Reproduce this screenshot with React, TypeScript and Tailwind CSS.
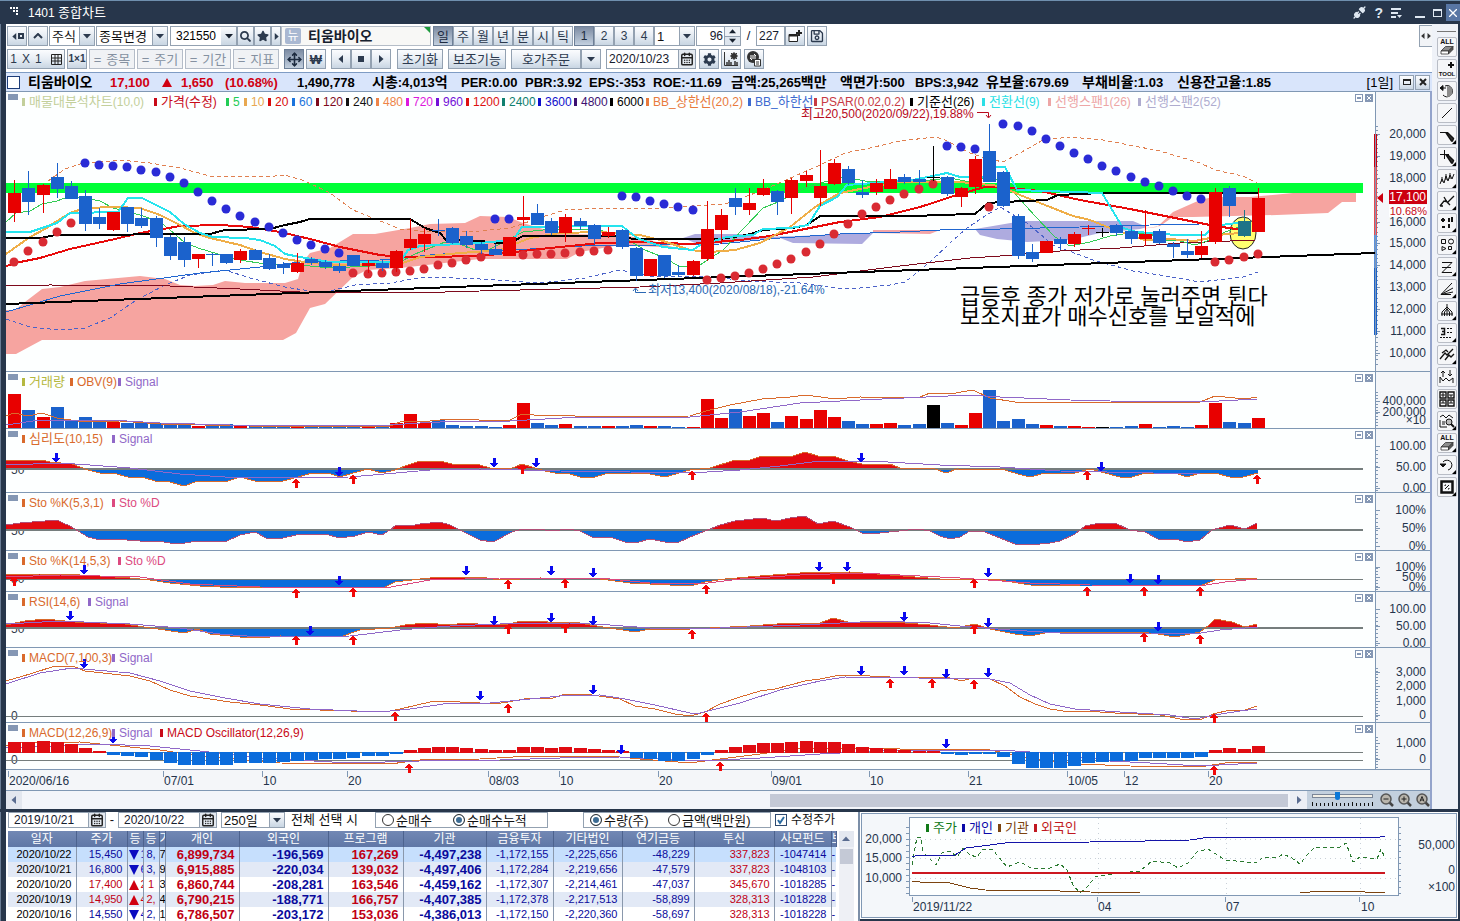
import React from 'react';
import { Move, CalendarDays, Unplug } from 'lucide-react';
import { FaCog, FaRegSave, FaSearch, FaStar } from 'react-icons/fa';

type Pt = [number, number];

const RED = '#e80000';
const BLUE = '#1b62cc';
const FIRST_X = 14.3;
const STEP = 14.13;
const xAt = (i: number) => Math.round(FIRST_X + STEP * i);

const parse = (s: string): Pt[] => s.trim().split(/\s+/).map((p) => p.split(',').map(Number) as Pt);

/* ---------- price data: kind, high, body top, body bottom, low ---------- */
type Candle = ['r' | 'b' | 'k' | 't', number, number, number, number];
const candles: Candle[] = [
  ['r', 180, 193, 213, 222], ['b', 171, 188, 202, 215], ['r', 184, 185, 195, 213], ['b', 163, 177, 189, 198],
  ['b', 181, 186, 199, 199], ['b', 190, 196, 224, 231], ['b', 208, 217, 224, 229], ['r', 212, 212, 230, 231],
  ['b', 207, 207, 224, 232], ['b', 208, 218, 226, 228], ['b', 216, 218, 238, 247], ['b', 235, 237, 256, 260],
  ['b', 237, 242, 260, 267], ['r', 254, 254, 259, 268], ['b', 253, 254, 255, 266], ['b', 254, 254, 263, 264],
  ['r', 249, 251, 260, 263], ['b', 249, 250, 260, 260], ['b', 254, 258, 269, 270], ['b', 262, 264, 268, 274],
  ['r', 253, 263, 272, 273], ['b', 257, 259, 263, 265], ['b', 260, 262, 267, 269], ['b', 263, 266, 271, 273],
  ['b', 255, 255, 266, 266], ['r', 260, 263, 266, 273], ['b', 260, 263, 268, 271], ['r', 250, 251, 268, 272],
  ['r', 219, 239, 248, 250], ['r', 228, 234, 244, 252], ['b', 219, 230, 231, 236], ['b', 227, 228, 243, 244],
  ['b', 231, 236, 245, 248], ['b', 242, 244, 250, 254], ['b', 244, 249, 255, 255], ['r', 237, 237, 256, 256],
  ['r', 196, 217, 220, 226], ['b', 204, 213, 225, 225], ['b', 218, 221, 233, 235], ['r', 214, 217, 233, 242],
  ['b', 218, 221, 226, 230], ['b', 224, 225, 239, 244], ['r', 227, 232, 236, 238], ['b', 229, 230, 247, 249],
  ['b', 247, 248, 276, 281], ['r', 259, 259, 276, 276], ['b', 255, 255, 276, 278], ['b', 265, 272, 275, 277],
  ['r', 260, 261, 275, 276], ['r', 201, 229, 259, 261], ['r', 209, 215, 230, 244], ['b', 188, 198, 207, 215],
  ['r', 188, 203, 210, 215], ['r', 179, 188, 195, 196], ['b', 190, 191, 202, 215], ['r', 178, 180, 198, 214],
  ['r', 171, 175, 181, 187], ['r', 150, 186, 198, 206], ['r', 159, 163, 184, 185], ['b', 166, 169, 183, 185],
  ['b', 180, 192, 195, 198], ['r', 179, 183, 192, 195], ['r', 169, 179, 189, 189], ['b', 174, 177, 182, 184],
  ['b', 170, 179, 182, 185], ['k', 146, 177, 178, 181], ['b', 176, 177, 194, 196], ['r', 187, 188, 197, 207],
  ['r', 156, 159, 187, 194], ['b', 124, 151, 182, 182], ['b', 171, 172, 206, 207], ['b', 214, 216, 256, 259],
  ['b', 244, 252, 259, 262], ['r', 241, 241, 253, 253], ['b', 237, 239, 244, 250], ['r', 232, 234, 244, 247],
  ['r', 225, 228, 229, 235], ['k', 228, 232, 233, 237], ['b', 224, 225, 233, 236], ['b', 226, 231, 239, 244],
  ['r', 210, 234, 239, 246], ['b', 229, 231, 243, 244], ['b', 242, 244, 247, 258], ['b', 239, 251, 255, 258],
  ['r', 231, 246, 255, 258], ['r', 188, 192, 242, 244], ['b', 186, 188, 206, 217], ['t', 210, 221, 236, 237],
  ['r', 188, 198, 232, 232],
];
const candleColor = { r: RED, b: BLUE, k: '#000000', t: '#1d7488' };

/* parabolic SAR: first index, colour, consecutive y values */
const sar: [number, string, number[]][] = [
  [0, '#d92b33', [262, 251, 242, 232, 223]],
  [5, '#2a2bd6', [163, 165, 166, 167, 170, 172, 177, 183, 192, 201, 209, 216, 222, 227, 233, 240, 245, 249, 253]],
  [24, '#d92b33', [273, 274, 273, 272, 271, 269, 265, 263, 260, 257]],
  [34, '#2a2bd6', [219, 219]],
  [36, '#d92b33', [255, 254, 254, 253, 252, 251, 250]],
  [43, '#2a2bd6', [196, 197, 201, 204, 207, 210]],
  [49, '#d92b33', [280, 278, 276, 273, 269, 264, 259, 252, 244, 234, 224, 214, 207, 200, 194, 189, 184]],
  [66, '#2a2bd6', [146, 147, 149]],
  [69, '#d92b33', [207]],
  [70, '#2a2bd6', [124, 126, 131, 139, 146, 153, 159, 166, 171, 177, 182, 186, 191, 196, 199]],
  [85, '#d92b33', [262, 260, 257, 254]],
];

const clouds: [string, string][] = [
  ['#f6a4a0', '6,310 15,310 25,302 42,289 60,287 85,281 140,276 165,279 180,285 195,286 213,285 225,281 245,283 285,283 298,279 303,262 310,253 330,248 353,234 375,234 410,228 430,224 465,223 480,216 508,217 523,223 553,232 563,234 623,235 650,240 673,247 660,247 620,245 580,252 567,259 480,259 400,268 367,270 353,277 325,304 310,308 296,333 283,340 42,340 16,354 6,354'],
  ['#aeabdf', '683,238 695,234 740,234 763,237 800,236 840,234 873,233 862,244 793,243 780,238 763,239 700,245'],
  ['#f3a5a8', '873,233 873,230 940,230 930,234'],
  ['#aeabdf', '975,229 993,226 1023,221 1133,221 1147,227 1140,229 1100,233 1070,240 1027,242 997,239 980,235'],
  ['#f6a4a0', '1140,229 1157,227 1173,212 1200,200 1213,197 1250,197 1293,193 1330,193 1342,183 1356,183 1356,202 1342,202 1328,213 1277,215 1193,217 1173,217 1160,226'],
];

const priceLines: { c: string; w: number; dash?: string; p: string }[] = [
  { c: '#e08050', w: 1, dash: '4 3', p: '48,181 65,169 80,164 120,160 150,163 180,168 210,176 275,176 285,175 305,181 330,193 353,210 400,229 430,232 480,231 510,228 545,216 565,210 600,208 660,208 725,204 750,195 770,187 820,165 845,153 870,148 900,141 935,137 943,139 970,153 985,158 1003,162 1020,153 1043,140 1070,137 1103,140 1160,151 1200,163 1215,170 1243,176 1257,183' },
  { c: '#4b62c8', w: 1, dash: '4 3', p: '6,319 30,327 60,330 85,328 110,318 135,301 165,285 190,275 225,270 250,278 285,287 310,291 330,291 355,285 390,283 425,277 480,279 540,283 585,278 620,270 650,276 700,276 750,281 800,283 835,288 860,288 890,285 905,282 930,262 950,243 967,228 985,216 1000,207 1027,223 1053,245 1093,260 1133,271 1160,275 1200,282 1243,277 1258,272' },
  { c: '#7d0a1c', w: 1, p: '6,286 50,285 170,286 240,289 300,292 410,293 480,291 640,287 720,283 813,277 900,266 970,258 1000,256 1060,251 1120,248 1180,243 1255,240' },
  { c: '#1f66d0', w: 1, p: '6,312 60,296 120,284 200,273 260,267 300,262 380,260 430,255 470,252 530,249 600,245 660,245 720,244 780,238 840,234 900,232 960,229 1000,229 1080,227 1150,225 1200,224 1245,224' },
  { c: '#33cc55', w: 1, p: '6,222 16,213 30,211 42,204 57,201 70,196 84,198 100,201 113,208 140,215 160,222 170,230 184,242 198,248 218,254 240,260 265,264 290,264 330,268 370,266 400,262 415,254 430,248 445,242 460,244 475,250 490,249 508,240 523,232 543,230 560,229 600,230 628,240 645,250 665,258 680,267 700,265 723,250 745,227 763,208 778,202 790,196 805,188 820,183 845,177 860,180 870,182 900,181 930,180 950,178 970,182 990,176 1008,186 1035,216 1055,237 1070,246 1090,242 1110,236 1130,233 1150,234 1165,240 1180,241 1195,245 1210,240 1225,232 1245,225' },
  { c: '#e80a0a', w: 2, p: '6,266 20,262 40,258 70,249 115,239 140,233 180,226 220,225 250,227 280,232 310,239 340,247 380,255 400,257 440,257 490,255 540,249 600,243 640,242 690,244 740,240 770,236 800,230 840,222 880,217 920,207 960,194 985,187 1010,188 1040,191 1080,200 1130,209 1180,219 1215,226 1243,230' },
  { c: '#efae48', w: 2, p: '6,254 30,237 45,229 57,221 70,213 85,208 115,207 140,208 160,215 180,225 195,233 210,238 240,245 260,252 285,259 310,263 340,265 400,264 420,257 460,253 500,250 530,238 560,233 600,232 640,235 660,240 690,250 710,252 735,250 760,243 790,227 815,207 840,193 870,187 900,182 960,182 1000,186 1020,195 1045,205 1073,216 1090,220 1110,228 1130,235 1145,240 1170,239 1195,241 1210,238 1225,234 1243,233' },
  { c: '#000000', w: 2, p: '6,238 40,238 56,235 210,234 225,230 270,229 285,225 300,222 310,219 410,219 425,228 440,233 446,240 480,241 508,244 523,236 625,236 632,239 720,239 747,235 763,230 793,228 807,225 820,216 913,216 970,214 975,214 988,203 1003,202 1047,200 1058,195 1103,193 1258,193' },
  { c: '#25e4ee', w: 2, p: '6,232 30,232 45,227 57,223 70,213 118,212 128,198 142,198 170,212 184,224 200,233 213,237 245,238 260,240 275,246 285,254 300,257 330,262 400,262 408,250 420,246 480,243 513,240 522,227 622,226 637,238 663,247 693,250 700,245 727,237 753,235 763,229 790,228 808,225 820,206 837,197 847,185 913,180 947,173 960,177 990,177 995,167 1005,167 1017,190 1102,193 1123,228 1137,232 1177,235 1205,235 1213,227 1227,224 1240,223' },
  { c: '#000000', w: 2, p: '6,304 480,286 970,268 1375,253' },
];

/* volume bar heights, in candle order */
const volumes = [34, 18, 11, 21, 8, 11, 6, 6, 5, 6, 5, 4, 4, 2, 2, 4, 2, 3, 2, 1, 1, 1, 1, 1, 2, 2, 1, 5, 14, 5, 8, 3, 2, 2, 1, 3, 25, 5, 3, 4, 2, 2, 2, 2, 3, 2, 2, 1, 1, 29, 10, 19, 12, 15, 6, 12, 9, 18, 11, 7, 4, 4, 5, 3, 4, 23, 5, 3, 15, 38, 7, 9, 4, 3, 2, 2, 1, 1, 1, 2, 4, 1, 2, 1, 3, 25, 6, 5, 10];

const oscillator = [10, 10, 11, 10, 8, 4, 1, -2, -3, -4, -7, -10, -12, -12, -12, -12, -10, -10, -10, -9, -8, -7, -6, -6, -5, -3, -3, -1, 2, 4, 5, 5, 4, 3, 2, 2, 5, 5, 4, 5, 4, 3, 2, 1, -5, -6, -8, -8, -6, -2, 2, 5, 7, 9, 9, 10, 11, 10, 10, 8, 5, 4, 3, 2, 1, 1, -1, -2, -1, -1, -4, -11, -15, -15, -15, -13, -10, -9, -8, -8, -5, -5, -5, -5, -4, 2, 4, 3, 6];

/* ---------- shared pieces ---------- */
const cells = (s: string) => [...s].reduce((n, ch) => n + (ch.charCodeAt(0) > 0x2000 ? 2 : 1), 0);

/* Korean runs are set one step larger than the Latin text around them. */
function T({ s, big = 'text-[13px]' }: { s: string; big?: string }) {
  return <>{s.split(/([\uac00-\ud7a3]+)/).map((part, i) => (i % 2 ? <span key={i} className={big}>{part}</span> : part))}</>;
}

function Legend({ items, place = 'left-4 top-1' }: { items: [string, string][]; place?: string }) {
  return (
    <div className={`absolute flex whitespace-nowrap text-xs leading-3 ${place}`}>
      {items.map(([label, color], i) => (
        <span key={i} className="flex items-center" style={{ color, width: cells(label) * 6 + 12 }}>
          <i className="mr-[4px] h-2 w-[3px] shrink-0 bg-current" />
          <span className="leading-3"><T s={label} /></span>
        </span>
      ))}
    </div>
  );
}

function Line({ p, c, w = 1, dash }: { p: string; c: string; w?: number; dash?: string }) {
  return <polyline points={p} fill="none" stroke={c} strokeWidth={w} strokeDasharray={dash} shapeRendering="crispEdges" />;
}

function Arrow({ x, y, up }: { x: number; y: number; up?: boolean }) {
  const d = up ? 'M0-5L4 0H2V5H-1V0H-4Z' : 'M0 5L4 0H2V-5H-1V0H-4Z';
  return <path d={d} transform={`translate(${x} ${y})`} fill={up ? '#f00808' : '#0a0af0'} shapeRendering="crispEdges" />;
}

function Arrows({ down, up }: { down: string; up: string }) {
  return (
    <g>
      {parse(down).map(([x, y], i) => <Arrow key={i} x={x} y={y} />)}
      {parse(up).map(([x, y], i) => <Arrow key={i} x={x} y={y} up />)}
    </g>
  );
}

function Area({ id, p, base, line, baseW = 2 }: { id: string; p: string; base: number; line: string; baseW?: number }) {
  const pts = parse(p);
  const d = `6,${base} ${p} ${pts[pts.length - 1][0]},${base}`;
  return (
    <g shapeRendering="crispEdges">
      <clipPath id={id + 'a'}><rect x="0" y={base - 60} width="1400" height="60" /></clipPath>
      <clipPath id={id + 'b'}><rect x="0" y={base} width="1400" height="60" /></clipPath>
      <polygon points={d} fill="#e20a10" clipPath={`url(#${id}a)`} />
      <polygon points={d} fill="#0a6cdc" clipPath={`url(#${id}b)`} />
      <Line p={`6,${base} 1363,${base}`} c="#757d7d" w={baseW} />
      <Line p={p} c={line} />
    </g>
  );
}

interface AxisSpec { labels: [string, number][]; from: number; to: number; gap: number }

function Axis({ top, height, labels, from, to, gap, children }: AxisSpec & { top: number; height: number; children?: React.ReactNode }) {
  const ticks: number[] = [];
  for (let y = from; y <= to; y += gap) ticks.push(Math.round(y));
  return (
    <svg className="block h-full w-[54px] shrink-0 overflow-visible" viewBox={`1376 ${top} 54 ${height}`} aria-hidden="true">
      {ticks.map((y) => <rect key={y} x="1376" y={y} width="2" height="1" fill="#8098b4" />)}
      {labels.map(([t, y], i) => (
        <g key={i}>
          <rect x="1376" y={y} width="4" height="1" fill="#8098b4" />
          <text x="1426" y={y + 4} textAnchor="end" fontSize="12" fill="#24344c">{t}</text>
        </g>
      ))}
      {children}
    </svg>
  );
}

function PanelButtons() {
  return (
    <div className="absolute right-[2px] top-[2px] flex gap-[2px]">
      <button aria-label="패널 최대화" className="flex size-2 items-center justify-center border border-[#8497b4] bg-white"><i className="h-[2px] w-1 bg-[#8497b4]" /></button>
      <button aria-label="패널 닫기" className="flex size-2 items-center justify-center bg-[#8497b4]">
        <svg viewBox="0 0 6 6" className="size-[6px]"><path d="M1 1l4 4M5 1l-4 4" stroke="#fff" /></svg>
      </button>
    </div>
  );
}

function Panel({ top, h, legend, axis, axisExtra, overlay, children, cls }: {
  top: number; h: number; legend: [string, string][]; axis: AxisSpec; axisExtra?: React.ReactNode; overlay?: React.ReactNode; children: React.ReactNode; cls: string;
}) {
  return (
    <section className={`flex border-t border-[#8098b4] ${cls}`}>
      <div className="relative min-w-0 flex-1 border-r border-[#8098b4]">
        <svg className="block h-full w-full overflow-visible" viewBox={`6 ${top + 1} 1369 ${h - 1}`} preserveAspectRatio="none" aria-hidden="true">
          {children}
        </svg>
        <i className="absolute left-[2px] top-[2px] h-[6px] w-[10px] bg-[#8497b4]" />
        <Legend items={legend} />
        <PanelButtons />
        {overlay}
      </div>
      <div className="shrink-0 bg-[#f4f6f9]">
        <Axis top={top + 1} height={h - 1} {...axis}>{axisExtra}</Axis>
      </div>
    </section>
  );
}

const LevelText = ({ y, t }: { y: number; t: string }) => <text x="11" y={y} fontSize="12" fill="#333c4c">{t}</text>;

/* ---------- toolbar controls ---------- */
const face = 'border border-[#93a1b1] bg-linear-to-b from-[#fbfcfe] via-[#e7edf4] to-[#c9d6e3] text-[#2c3a4e]';
const faceOn = 'border border-[#6d7f97] bg-linear-to-b from-[#7d8ca3] to-[#c3d0df] text-[#1d2b40]';

function Btn({ label, children, cls = 'w-5', on, muted }: { label?: string; children: React.ReactNode; cls?: string; on?: boolean; muted?: boolean }) {
  const skin = on ? faceOn : muted ? 'border border-[#b4bcc8] bg-[#f0f2f5] text-[#8591a1]' : face;
  return (
    <button aria-label={label} className={`flex h-5 shrink-0 items-center justify-center whitespace-nowrap text-[13px] leading-none ${skin} ${cls}`}>
      {children}
    </button>
  );
}

const Tri = ({ d, s = 8 }: { d: string; s?: number }) => (
  <svg viewBox="0 0 8 8" width={s} height={s} fill="currentColor" className="shrink-0" aria-hidden="true"><path d={d} /></svg>
);
const DOWN = 'M0 2H8L4 6.500Z';
const UP = 'M0 6H8L4 1.500Z';
const LEFT = 'M6 0V8L1.500 4Z';
const RIGHT = 'M2 0V8L6.500 4Z';

function Select({ label, options, cls, h = 'h-5' }: { label: string; options: string[]; cls: string; h?: string }) {
  return (
    <span className={`flex shrink-0 border border-[#93a1b1] bg-white ${h} ${cls}`}>
      <select aria-label={label} className="min-w-0 flex-1 appearance-none bg-transparent pl-[2px] text-[13px] leading-none text-[#111] outline-none">
        {options.map((o) => <option key={o}>{o}</option>)}
      </select>
      <span className="flex w-[15px] items-center justify-center border-l border-[#93a1b1] bg-linear-to-b from-[#fbfcfe] to-[#c9d6e3] text-[#2c3a4e]"><Tri d={DOWN} /></span>
    </span>
  );
}

function DateField({ label, value, cls, h = 'h-5', size = 'pl-[2px]' }: { label: string; value: string; cls: string; h?: string; size?: string }) {
  return (
    <span className={`flex shrink-0 border border-[#93a1b1] bg-white ${h} ${cls}`}>
      <input aria-label={label} defaultValue={value} className={`min-w-0 flex-1 bg-transparent text-xs leading-none text-[#16202e] outline-none ${size}`} />
      <button aria-label={`${label} 달력`} className="flex w-[17px] items-center justify-center border-l border-[#93a1b1] bg-[#e3e9f0] text-[#222]"><CalendarDays size={14} strokeWidth={2.500} /></button>
    </span>
  );
}

function Toolbar() {
  return (
    <div className="relative flex h-12 flex-col gap-[3px] bg-white pl-[1px] pt-[2px]">
      <div className="flex">
        <Btn label="왼쪽 접기"><Tri d={LEFT} s={7} /><i className="size-[6px] border-2 border-current" /></Btn>
        <Btn label="위로" cls="ml-[1px] w-5"><svg viewBox="0 0 10 6" className="w-[10px]" fill="none" stroke="currentColor" strokeWidth="2"><path d="M1 5l4-4 4 4" /></svg></Btn>
        <Select label="시장" options={['주식']} cls="ml-[1px] w-[46px]" />
        <Select label="종목변경" options={['종목변경']} cls="ml-[1px] w-[72px]" />
        <span className="ml-[2px] flex h-5 w-[67px] shrink-0 border border-[#93a1b1]">
          <input aria-label="종목코드" defaultValue="321550" className="min-w-0 flex-1 pl-[5px] text-xs leading-none text-black outline-none" />
          <button aria-label="종목 이력" className="flex w-[15px] items-center justify-center bg-linear-to-b from-[#fbfcfe] to-[#c9d6e3]"><Tri d={DOWN} /></button>
        </span>
        <Btn label="종목검색" cls="w-[17px]"><FaSearch size={11} /></Btn>
        <Btn label="관심종목" cls="w-[17px]"><FaStar size={12} /></Btn>
        <Btn label="다음" cls="w-[10px]"><Tri d={RIGHT} s={7} /></Btn>
        <span className="relative flex h-5 w-[150px] shrink-0 items-center border border-[#b5bdc7] bg-[#f8f8f6]">
          <b className="ml-[3px] flex size-4 items-center justify-center rounded-[2px] bg-[#a9b8d2] text-xs font-normal leading-none text-white">뉴</b>
          <b className="ml-[7px] text-[14px] leading-none">티움바이오</b>
          <svg viewBox="0 0 6 6" className="absolute right-0 top-0 size-[6px]" fill="#1d9a3c"><path d="M0 0H6V6Z" /></svg>
        </span>
        <span className="ml-[2px] flex">
          {['일', '주', '월', '년', '분', '시', '틱'].map((t, i) => <Btn key={t} on={i === 0}>{t}</Btn>)}
        </span>
        <span className="ml-[1px] flex">
          {['1', '2', '3', '4'].map((t, i) => <Btn key={t} on={i === 0}><span className="text-xs">{t}</span></Btn>)}
        </span>
        <Select label="주기" options={['1', '2', '3']} cls="w-[41px]" />
        <span className="ml-[1px] flex h-5 w-[45px] shrink-0 border border-[#93a1b1]">
          <input aria-label="표시 봉수" defaultValue="96" className="min-w-0 flex-1 pr-[1px] text-right text-xs leading-none outline-none" />
          <span className="flex w-4 flex-col border-l border-[#93a1b1]">
            <button aria-label="증가" className="flex flex-1 items-center justify-center bg-[#eef2f7]"><Tri d={UP} s={7} /></button>
            <button aria-label="감소" className="flex flex-1 items-center justify-center border-t border-[#93a1b1] bg-[#dde5ee]"><Tri d={DOWN} s={7} /></button>
          </span>
        </span>
        <span className="w-[15px] text-center text-[13px] leading-5">/</span>
        <input aria-label="전체 봉수" defaultValue="227" className="h-5 w-[29px] shrink-0 border border-[#93a1b1] pl-[2px] text-xs leading-none outline-none" />
        <Btn label="새 차트"><svg viewBox="0 0 14 14" className="size-[14px]" fill="none" stroke="#222"><path d="M1 5.500H9.500V12.500H1Z" fill="#fff" /><path d="M1 6.500H9.500" strokeWidth="2" /><path d="M11 1V7M8 4H14" strokeWidth="2" /></svg></Btn>
        <Btn label="저장" cls="ml-[2px] w-5"><FaRegSave size={14} /></Btn>
      </div>
      <div className="flex">
        <Btn label="분할 설정" cls="w-[58px] gap-[9px]"><span className="flex gap-[5px] text-xs"><span>1</span><span>X</span><span>1</span></span><svg viewBox="0 0 11 11" className="size-[11px]" fill="none" stroke="#222"><path d="M.5.5H10.500V10.500H.5ZM.5 4H10.500M.5 7H10.500M4 .5V10.500M7 .5V10.500" /></svg></Btn>
        <Btn label="1×1" cls="ml-[2px] w-5"><b className="text-[10px]">1×1</b></Btn>
        {['종목', '주기', '기간', '지표'].map((t) => (
          <Btn key={t} muted cls="ml-[2px] w-[46px] gap-[5px]"><span>=</span><span>{t}</span></Btn>
        ))}
        <Btn label="이동" on cls="ml-[5px] w-5"><Move size={15} strokeWidth={2.500} /></Btn>
        <Btn label="원화" cls="ml-[2px] w-5"><b className="text-[13px]">₩</b></Btn>
        <span className="ml-[5px] flex">
          <Btn label="이전"><Tri d={LEFT} /></Btn>
          <Btn label="정지"><i className="size-[6px] bg-current" /></Btn>
          <Btn label="재생"><Tri d={RIGHT} /></Btn>
        </span>
        <Btn cls="ml-[6px] w-[46px]">초기화</Btn>
        <Btn cls="ml-[5px] w-[58px]">보조기능</Btn>
        <Btn cls="ml-[5px] w-[70px]">호가주문</Btn>
        <Btn label="호가주문 메뉴"><Tri d={DOWN} /></Btn>
        <DateField label="기준일" value="2020/10/23" cls="ml-[5px] w-[90px]" />
        <Btn label="설정" cls="ml-[3px] w-5"><FaCog size={13} /></Btn>
        <Btn label="지표 설정" cls="ml-[2px] w-5"><svg viewBox="0 0 16 16" className="size-4" fill="none" stroke="#333"><path d="M1.500 1V14.500H15" /><path d="M4 14V11M6 14V9M8 14V11M12 14V10M14 14V11" strokeWidth="1.500" /><circle cx="11" cy="5" r="2" strokeWidth="2" /><path d="M11 1V9M7 5H15M8 2L14 8M14 2L8 8" /></svg></Btn>
        <Btn label="차트 변환" cls="ml-[3px] w-5"><svg viewBox="0 0 16 16" className="size-4" fill="none" stroke="#fff"><circle cx="7" cy="6" r="6" fill="#333" stroke="none" /><path d="M4 5H10L8 3M10 7H4L6 9" /><path d="M8.500 8.500H14.500V15H8.500Z" fill="#fff" stroke="#333" /><path d="M10 11H13M10 13H13" stroke="#333" /></svg></Btn>
      </div>
      <button aria-label="도구 접기" className="absolute right-0 top-[1px] flex h-[22px] w-[13px] items-center justify-center border border-r-0 border-[#93a1b1] bg-[#f2f4f7] text-[#333]">
        <Tri d={LEFT} s={6} /><Tri d={RIGHT} s={6} />
      </button>
    </div>
  );
}

const facts = ['시총:4,013억', 'PER:0.00', 'PBR:3.92', 'EPS:-353', 'ROE:-11.69', '금액:25,265백만', '액면가:500', 'BPS:3,942', '유보율:679.69', '부채비율:1.03', '신용잔고율:1.85'];
const boldWidth = (s: string) => [...s].reduce((n, ch) => n + (ch.charCodeAt(0) > 0x2000 ? 13 : 7), 0);

function InfoBar() {
  return (
    <div className="flex h-[19px] items-center whitespace-nowrap border-t border-[#7f9cc4] bg-[#d9e5fb] pl-[1px] text-[13px] font-bold leading-none text-black">
      <input type="checkbox" aria-label="종목 선택" className="size-[13px] shrink-0 appearance-none border border-[#1d3c78] bg-white" />
      <span className="ml-2 w-[82px] shrink-0 text-[14px]">티움바이오</span>
      <span className="flex w-[187px] shrink-0 items-center text-[#d00012]">
        <span className="w-[52px]">17,100</span>
        <svg viewBox="0 0 10 9" className="mr-[9px] h-[9px] w-[10px]" fill="#d00012"><path d="M5 0L10 9H0Z" /></svg>
        <span className="w-[44px]">1,650</span>
        <span>(10.68%)</span>
      </span>
      <span className="w-[75px] shrink-0">1,490,778</span>
      {facts.map((f) => <span key={f} className="mr-2 shrink-0" style={{ width: boldWidth(f) }}><T s={f} big="text-[14px] leading-none" /></span>)}
      <span className="ml-auto font-normal">[1일]</span>
      <button aria-label="차트 최대화" className={`ml-[6px] flex size-[15px] items-center justify-center ${face}`}><i className="h-[6px] w-2 border border-t-2 border-[#222]" /></button>
      <button aria-label="차트 닫기" className={`ml-[1px] mr-[2px] flex size-[15px] items-center justify-center ${face}`}>
        <svg viewBox="0 0 8 8" className="size-2"><path d="M1 1l6 6M7 1l-6 6" stroke="#222" strokeWidth="2" /></svg>
      </button>
    </div>
  );
}

/* ---------- drawing tools ---------- */
const Pencil = () => <path d="M8.500 7.500L10 7L15.500 12.500L14.500 15L13.500 15Z" fill="#333" stroke="#111" strokeWidth="1.400" />;
const Eraser = () => (
  <g stroke="#333" strokeWidth=".8"><path d="M3 13L7.500 8.500H15L10.500 13Z" fill="#8d8d8d" /><path d="M3 13H10.500V16H3Z" fill="#fff" /><path d="M10.500 13L15 8.500V11.500L10.500 16Z" fill="#555" /></g>
);
const Word = ({ y, t, s }: { y: number; t: string; s: number }) => (
  <text x="9" y={y} fontSize={s} fontWeight="bold" textAnchor="middle" fill="#111" stroke="none">{t}</text>
);
const tools: [string, React.ReactNode, boolean][] = [
  ['전체 지우기', <g key="0"><Word y={6} t="ALL" s={7} /><Eraser /></g>, false],
  ['도구 추가', <g key="1"><path d="M13 2V8M10 5H16" strokeWidth="2" /><Word y={16} t="TOOL" s={6} /></g>, false],
  ['되돌리기', <g key="2"><path d="M7 4A5.500 5.500 0 1 1 5 13" /><path d="M9 4V15A5.500 5.500 0 0 0 9 4" fill="#8c8c8c" stroke="none" /><path d="M2 6H8M2 6L5 3.500V8.500Z" fill="#111" /></g>, false],
  ['추세선', <path key="3" d="M4 14L14 4" />, false],
  ['선 편집', <g key="4"><path d="M2 6.500H10" /><Pencil /></g>, true],
  ['십자선', <g key="5"><path d="M6.500 2V11M2 6.500H11" /><Pencil /></g>, true],
  ['패턴', <path key="6" d="M2 14L4 9L6 13L8 6L10 11L12 5L14 9L16 4M4 7V12M8 4V10M12 3V9" />, true],
  ['추세대', <path key="7" d="M2 14L6 9L10 10L16 4M6 5L9 10L12 13M2 14H5" strokeWidth="1.300" />, true],
  ['수치', <g key="8" strokeWidth="2"><path d="M3 6H7M5 4V8M11 4V8M4 13H7M14 3V8M11 10V14" /></g>, true],
  ['도형', <g key="9"><path d="M3.500 3.500H7.500V7.500H3.500Z" /><circle cx="13" cy="5.500" r="2.500" /><path d="M4 10.500L8 12.500L4 14.500Z" /><path d="M10.500 10.500H13.500V13.500H10.500Z" /></g>, true],
  ['지그재그', <path key="10" d="M4 4.500H14L4 14.500H14M4 9.500H13" />, true],
  ['팬', <path key="11" d="M3 14.500L14 3M3 14.500L15 8M3 14.500L15 12M3 14.500H13" />, true],
  ['갈퀴', <path key="12" d="M9 2V14M9 5L4 10V14M9 5L14 10V14M9 7L6.500 10V14M9 7L11.500 10V14M3 12H15" />, true],
  ['되돌림', <g key="13"><path d="M3 4.500H6.500V10.500H3M4 7.500H6.500" strokeWidth="1.500" /><path d="M9 4.500H15M9 8.500H15M2 13.500H13" strokeDasharray="2 1" /></g>, true],
  ['파동', <path key="14" d="M2 13L7 7L9 9L15 3M4 7L8 4L10 6M7 14L11 9L13 11L16 8" strokeWidth="1.300" />, true],
  ['상하 화살표', <path key="15" d="M5 9V3M3 5L5 3L7 5M12 2V8M10 6L12 8L14 6M2 15V9L5 13L8 10L11 13L15 10V15" />, false],
  ['다중 차트', <g key="16"><path d="M2 2H8V8H2ZM10 2H16V8H10ZM2 10H8V16H2ZM10 10H16V16H10Z" strokeWidth="1.400" /><path d="M4 4H6V6H4ZM12 4V6H14V4M4 14V12H6V14M12 14V12H14V14" /></g>, false],
  ['종목 분석', <g key="17"><path d="M2 5L5 3L8 6L11 3L15 6M2 8V15H9M4 10H7M4 12H7" /><circle cx="11" cy="10" r="3" fill="#bbb" /><path d="M13 12L16 15" strokeWidth="2" /></g>, true],
  ['모두 삭제', <g key="18"><Word y={6} t="ALL" s={7} /><Eraser /></g>, true],
  ['초기 상태', <g key="19"><path d="M5 6A5 5 0 1 1 10 14" /><path d="M2 8H8L5 11Z" fill="#111" /></g>, true],
  ['전체 화면', <g key="20"><path d="M3.500 3.500H14.500V14.500H3.500Z" strokeWidth="2.500" /><path d="M7 11L11 7M7 8V7H8M11 10V11H10" /></g>, true],
];

function ToolStrip() {
  return (
    <aside className="w-[26px] shrink-0 bg-[#eff2f8] pl-[5px] pt-[7px]">
      <div className="mb-[5px] h-px w-[19px] bg-[#777]" />
      <div className="flex flex-col gap-[2px]">
        {tools.map(([label, art, corner]) => (
          <button key={label} aria-label={label} className="size-5 rounded-[2px] border border-[#b9bdc6] bg-[#f5f6f8]">
            <svg viewBox="0 0 18 18" className="block size-[18px]" fill="none" stroke="#111" strokeWidth="1">
              {art}
              {corner && <path d="M18 14V18H14Z" fill="#000" stroke="none" />}
            </svg>
          </button>
        ))}
      </div>
    </aside>
  );
}

/* ---------- chart panels ---------- */
const ORANGE = '#d96a2c';
const PURPLE = '#9068c8';

const mainLegend: [string, string][] = [
  ['매물대분석차트(10,0)', '#c3cf9b'], ['가격(수정)', '#c80a18'], ['5', '#22cc55'], ['10', '#e8a850'], ['20', '#d80c0c'], ['60', '#1a74dd'],
  ['120', '#7d0a1c'], ['240', '#111111'], ['480', '#ee8448'], ['720', '#dd18dd'], ['960', '#7410d8'], ['1200', '#dd1010'], ['2400', '#108070'],
  ['3600', '#1010cc'], ['4800', '#3c1070'], ['6000', '#000000'], ['BB_상한선(20,2)', '#e87a3c'], ['BB_하한선', '#3c6ad0'], ['PSAR(0.02,0.2)', '#c83a44'],
  ['기준선(26)', '#000000'], ['전환선(9)', '#2bdfe6'], ['선행스팬1(26)', '#eda6a6'], ['선행스팬2(52)', '#aeaccf'],
];

function PricePanel() {
  return (
    <Panel
      top={91} h={280} cls="h-[280px]" legend={mainLegend}
      axis={{ labels: [['20,000', 134], ['19,000', 156], ['18,000', 178], ['16,000', 222], ['15,000', 243], ['14,000', 265], ['13,000', 287], ['12,000', 309], ['11,000', 331], ['10,000', 353]], from: 126, to: 364, gap: 4.4 }}
      axisExtra={
        <g>
          <rect x="1374" y="134" width="3" height="33" fill="#cc0010" />
          <rect x="1374" y="167" width="3" height="68" fill="#e84a50" />
          <rect x="1374" y="235" width="3" height="33" fill="#5a90dc" />
          <rect x="1374" y="268" width="3" height="67" fill="#1c62c8" />
          <path d="M1377 198L1383 193V203Z" fill="#cc0010" />
          <rect x="1389" y="205" width="38" height="12" fill="#fdffff" />
          <rect x="1389" y="190" width="38" height="14" fill="#cc0010" />
          <text x="1426" y="201" textAnchor="end" fontSize="12" fill="#fff">17,100</text>
          <text x="1427" y="215" textAnchor="end" fontSize="11" fill="#c80a18">10.68%</text>
        </g>
      }
      overlay={
        <>
          <p className="absolute left-[795px] top-[16px] whitespace-nowrap text-xs leading-3 text-[#b80a1c]"><T s="최고20,500(2020/09/22),19.88%" big="text-[13px] leading-3" /></p>
          <p className="absolute left-[642px] top-[192px] whitespace-nowrap text-xs leading-3 text-[#2a68b4]"><T s="최저13,400(2020/08/18),-21.64%" big="text-[13px] leading-3" /></p>
          <p className="absolute left-[954px] top-[195px] whitespace-nowrap text-[22px] leading-5 text-black">급등후 종가 저가로 눌러주면 튄다<br />보조지표가 매수신호를 보일적에</p>
        </>
      }
    >
      {clouds.map(([c, p], i) => <polygon key={i} points={p} fill={c} />)}
      <rect x="6" y="183" width="1357" height="10" fill="#00ff37" />
      <ellipse cx="1243" cy="233" rx="13" ry="16" fill="#ffff70" stroke="#222" />
      {priceLines.map((l, i) => <Line key={i} {...l} />)}
      {sar.map(([start, c, ys]) => ys.map((y, k) => <circle key={start + k} cx={xAt(start + k)} cy={y} r="4.500" fill={c} />))}
      <g shapeRendering="crispEdges">
        {candles.map(([k, hi, a, b, lo], i) => (
          <g key={i} fill={candleColor[k]}>
            <rect x={xAt(i)} y={hi} width="1" height={lo - hi} />
            <rect x={xAt(i) - 6} y={a} width="13" height={b - a} />
          </g>
        ))}
      </g>
      <path d="M977 112.500H988.500V117M986 115L988.500 118L991 115" fill="none" stroke="#b80a1c" />
      <path d="M646 292.500H635.500V289M633 291L635.500 288L638 291" fill="none" stroke="#2a68b4" />
    </Panel>
  );
}

function Indicators() {
  const sto2 = '6,575 40,574 60,574 100,576 130,578 150,580 170,583 200,586 240,588 300,587 385,587 395,582 420,579 440,577 480,577 500,580 540,578 600,579 630,583 690,586 705,582 725,579 760,576 800,573 850,572 890,575 940,579 970,579 1000,580 1030,585 1080,586 1200,586 1215,580 1235,579 1257,578';
  return (
    <>
      <Panel top={371} h={57} cls="h-[57px]" legend={[['거래량', '#b5b840'], ['OBV(9)', ORANGE], ['Signal', PURPLE]]}
        axis={{ labels: [['400,000', 401], ['200,000', 412]], from: 392, to: 426, gap: 3 }}
        axisExtra={<text x="1426" y="424" textAnchor="end" fontSize="12" fill="#24344c">×10</text>}>
        <g shapeRendering="crispEdges">
          {volumes.map((v, i) => <rect key={i} x={xAt(i) - 6} y={428 - v} width="13" height={v} fill={candleColor[candles[i][0] === 't' ? 'b' : candles[i][0]]} />)}
        </g>
        <Line c={ORANGE} p="6,416 14,413 28,416 42,413 57,418 85,422 120,421 160,424 250,426 390,426 400,422 430,421 450,419 508,421 522,414 545,416 570,415 580,417 690,416 706,411 730,405 762,399 790,397 806,395 835,399 860,397 910,398 920,397 930,393 950,394 973,390 990,398 1015,402 1200,402 1215,396 1245,399 1257,397" />
        <Line c={PURPLE} p="6,425 40,420 110,420 160,423 230,425 390,425 420,423 460,421 510,421 545,419 580,417 690,417 740,412 800,403 860,400 970,395 1000,397 1070,400 1110,401 1200,402 1257,399" />
      </Panel>

      <Panel top={428} h={64} cls="h-[64px]" legend={[['심리도(10,15)', ORANGE], ['Signal', PURPLE]]}
        axis={{ labels: [['100.00', 446], ['50.00', 467], ['0.00', 488]], from: 446, to: 490, gap: 4 }}>
        <LevelText y={474} t="50" />
        <Area id="psy" base={469} line={ORANGE} p="6,460 42,460 50,462 72,464 80,467 88,470 100,473 113,473 128,477 142,477 155,481 170,482 184,486 198,481 228,481 240,477 255,481 283,481 298,477 312,473 328,473 340,477 353,473 368,469 382,473 395,470 405,466 420,461 440,461 452,464 480,465 490,468 510,469 522,464 535,468 545,471 555,473 567,473 580,477 595,477 608,473 645,473 665,477 690,470 710,468 735,460 750,460 762,456 790,457 805,452 818,456 833,456 848,461 862,464 890,464 900,468 935,469 946,473 957,469 1005,470 1018,474 1030,477 1045,473 1075,473 1090,469 1105,473 1120,477 1132,477 1145,473 1175,473 1187,477 1200,473 1215,473 1230,477 1243,477 1258,473" />
        <Line c={PURPLE} p="6,465 60,463 90,465 130,468 180,474 240,478 350,477 430,470 480,469 560,471 630,472 690,473 740,470 780,466 820,461 870,461 940,465 1000,467 1060,471 1200,474 1258,474" />
        <Arrows down="56,458 339,472 494,463 536,463 861,458 1101,467" up="296,483 353,479 522,469 692,475 1087,475 1257,479" />
      </Panel>

      <Panel top={492} h={58} cls="h-[58px]" legend={[['Sto %K(5,3,1)', ORANGE], ['Sto %D', '#dc4a80']]}
        axis={{ labels: [['100%', 510], ['50%', 528], ['0%', 546]], from: 510, to: 548, gap: 4 }}>
        <LevelText y={535} t="50" />
        <Area id="sto1" base={530} line="#b05078" p="6,525 20,523 45,521 57,520 63,523 70,526 78,531 88,537 100,540 113,539 140,541 158,541 170,543 185,543 198,541 227,541 240,535 255,532 268,539 283,538 300,534 325,534 340,538 355,536 368,532 382,535 390,530 396,525 410,526 420,524 440,522 450,525 466,533 480,540 493,542 512,532 522,529 538,529 552,531 568,529 580,531 592,537 610,537 625,542 635,543 650,539 665,542 677,543 690,537 705,531 720,525 735,521 762,518 776,521 790,518 805,516 818,524 833,521 850,527 862,533 880,533 918,529 930,531 940,536 950,539 960,537 970,531 985,532 1000,538 1015,544 1030,545 1050,543 1060,541 1075,534 1085,526 1100,523 1115,523 1130,530 1145,532 1158,539 1175,539 1187,542 1200,540 1212,530 1230,525 1245,529 1257,523" />
      </Panel>

      <Panel top={550} h={41} cls="h-[41px]" legend={[['Sto %K(14,5,3)', ORANGE], ['Sto %D', '#dc4a80']]}
        axis={{ labels: [['100%', 567], ['50%', 577], ['0%', 587]], from: 568, to: 590, gap: 3 }}>
        <LevelText y={583} t="50" />
        <Area id="sto2" base={579} baseW={1} line={ORANGE} p={sto2} />
        <Line c="#dc4a80" p="6,577 60,575 140,577 190,584 260,587 385,588 430,580 500,578 600,578 650,583 700,584 740,579 800,575 860,573 960,578 1030,583 1090,585 1200,586 1225,582 1257,579" />
        <Arrows down="84,570 339,581 466,571 551,571 593,573 819,567 847,567 988,573 1130,579 1158,580" up="14,581 296,593 353,592 508,584 565,583 706,589 833,579 974,583 1087,591 1144,591 1200,591" />
      </Panel>

      <Panel top={591} h={56} cls="h-[56px]" legend={[['RSI(14,6)', ORANGE], ['Signal', PURPLE]]}
        axis={{ labels: [['100.00', 609], ['50.00', 626], ['0.00', 643]], from: 609, to: 645, gap: 4 }}>
        <LevelText y={633} t="50" />
        <Area id="rsi" base={628} line={ORANGE} p="6,625 25,621 45,619 75,622 125,624 150,628 165,630 184,633 198,629 210,634 240,637 260,638 280,636 340,637 360,630 390,628 405,625 425,623 450,625 465,623 490,625 508,624 522,621 540,621 555,623 575,622 590,625 610,628 635,632 650,629 690,629 750,626 790,623 820,623 833,618 848,622 905,623 930,625 955,628 975,624 990,629 1015,634 1030,636 1050,632 1140,632 1158,634 1175,637 1190,634 1200,632 1208,626 1215,619 1232,622 1245,627 1257,624" />
        <Line c={PURPLE} p="6,624 60,621 130,624 180,628 220,634 260,637 350,636 400,630 450,626 500,624 570,623 610,625 650,628 720,628 800,625 880,621 930,623 960,626 1010,630 1060,633 1150,633 1195,634 1220,630 1258,627" />
        <Arrows down="70,616 310,631 494,621 551,618 593,621 904,617 988,623 1158,627" up="296,640 353,640 508,629 565,628 692,634 974,629 1144,637 1200,639" />
      </Panel>

      <Panel top={647} h={75} cls="h-[75px]" legend={[['MACD(7,100,3)', ORANGE], ['Signal', PURPLE]]}
        axis={{ labels: [['3,000', 672], ['2,000', 686], ['1,000', 701], ['0', 715]], from: 668, to: 720, gap: 3 }}>
        <LevelText y={720} t="0" />
        <Line c="#757d7d" p="6,716 1363,716" />
        <Line c={ORANGE} p="6,681 30,674 55,666 75,667 85,671 130,676 150,681 170,690 190,696 230,702 260,705 290,709 350,711 385,712 400,709 430,702 440,701 480,703 495,704 508,702 530,698 553,698 565,694 585,694 620,699 635,706 655,709 675,714 690,716 705,712 720,704 740,697 760,691 775,689 790,685 805,681 820,679 835,676 850,675 890,677 950,678 962,681 972,678 990,679 1005,686 1020,697 1035,704 1050,709 1070,712 1085,711 1115,713 1160,715 1180,719 1200,720 1213,714 1230,710 1245,710 1257,706" />
        <Line c={PURPLE} p="6,684 40,673 72,668 130,673 160,681 190,691 225,698 260,704 310,709 380,712 410,709 450,703 490,703 530,699 560,696 600,695 625,699 655,705 690,713 700,713 740,703 780,690 820,681 845,677 990,679 1010,683 1030,695 1050,704 1075,709 1120,712 1170,715 1195,719 1215,715 1240,711 1257,709" />
        <Arrows down="84,664 480,696 593,690 861,671 904,671 946,674 988,673" up="395,716 508,708 706,717 890,683 932,683 974,684 1214,718" />
      </Panel>

      <Panel top={722} h={47} cls="h-[47px]" legend={[['MACD(12,26,9)', ORANGE], ['Signal', PURPLE], ['MACD Oscillator(12,26,9)', '#c80a18']]}
        axis={{ labels: [['1,000', 743], ['0', 759]], from: 737, to: 768, gap: 3 }}>
        <LevelText y={764} t="0" />
        <Line c="#757d7d" p="6,752 1363,752" />
        <Line c="#757d7d" p="6,760 1363,760" />
        <Line c={ORANGE} p="6,746 20,743 80,742 130,747 160,750 200,756 280,763 390,764 420,760 480,759 530,756 610,756 640,759 690,763 720,759 760,754 800,748 900,749 990,750 1040,760 1080,764 1130,766 1200,767 1225,763 1257,762" />
        <Line c={PURPLE} p="6,748 100,744 150,746 200,751 260,758 350,763 420,761 500,760 560,758 620,757 660,759 700,761 760,758 820,754 900,750 1000,750 1060,754 1110,761 1150,763 1200,766 1257,763" />
        <g shapeRendering="crispEdges">
          {oscillator.map((v, i) => <rect key={i} x={xAt(i) - 6} y={v > 0 ? 752 - v : 752} width="13" height={Math.abs(v) + 1} fill={v > 0 ? '#e00c12' : '#0a6cdc'} />)}
        </g>
        <Arrows down="113,739 621,750 946,744" up="409,768 720,766 1214,770" />
      </Panel>
    </>
  );
}

const dates: [string, number][] = [['2020/06/16', 8], ['07/01', 163], ['10', 262], ['20', 347], ['08/03', 488], ['10', 559], ['20', 658], ['09/01', 771], ['10', 869], ['21', 968], ['10/05', 1067], ['12', 1124], ['20', 1208]];

function Lens({ sign }: { sign: string }) {
  return (
    <button aria-label={`확대 축소 ${sign}`} className="size-[14px]">
      <svg viewBox="0 0 14 14" className="block size-[14px]">
        <path d="M9 9L13 13" stroke="#444" strokeWidth="2.500" />
        <circle cx="6" cy="6" r="5" fill="#b9b5ac" stroke="#555" strokeWidth="1.500" />
        <path d={sign === '-' ? 'M3.500 6H8.500' : sign === '+' ? 'M3.500 6H8.500M6 3.500V8.500' : 'M4 8.500L6 3.500L8 8.500M4.500 7H7.500'} stroke="#222" fill="none" />
      </svg>
    </button>
  );
}

function TimeAxis() {
  return (
    <>
      <div className="flex h-[21px] border-t border-[#8098b4] bg-[#f4f6f9]">
        <svg className="block h-full min-w-0 flex-1" viewBox="6 770 1370 20" preserveAspectRatio="none" aria-hidden="true">
          {dates.map(([t, x], i) => (
            <g key={i}>
              <rect x={x} y="771" width="1" height="6" fill="#8098b4" />
              <text x={x + 1} y="785" fontSize="12" fill="#24344c">{t}</text>
            </g>
          ))}
        </svg>
        <div className="w-[54px] shrink-0" />
      </div>
      <div className="flex h-[19px] items-center border-t border-[#8098b4] bg-[#f3f5fa]">
        <button aria-label="왼쪽으로" className="flex h-[18px] w-4 shrink-0 items-center justify-center bg-[#e3e7ef] text-[#5a6c90]"><Tri d={LEFT} /></button>
        <div className="flex min-w-0 flex-1 justify-end"><div className="h-[13px] w-[518px] bg-[#c4c9d6]" /></div>
        <button aria-label="오른쪽으로" className="ml-[2px] flex h-[18px] w-[17px] shrink-0 items-center justify-center bg-[#eceff5] text-[#5a6c90]"><Tri d={RIGHT} /></button>
        <div className="flex h-[18px] w-[123px] shrink-0 items-center gap-1 bg-[#c3d0de] pl-[5px]">
          <div className="mr-[3px] flex w-[61px] flex-col gap-1">
            <input type="range" aria-label="봉 간격" defaultValue={40} className="h-1 w-full appearance-none border border-[#7a8698] bg-[#f2efe6] [&::-webkit-slider-thumb]:h-2 [&::-webkit-slider-thumb]:w-[5px] [&::-webkit-slider-thumb]:appearance-none [&::-webkit-slider-thumb]:rounded-b-full [&::-webkit-slider-thumb]:bg-[#0a78d8]" />
            <svg viewBox="0 0 61 4" className="h-1 w-full" preserveAspectRatio="none">
              {Array.from({ length: 16 }, (_, i) => <rect key={i} x={i * 4} y={i % 5 ? 1 : 0} width="1" height="4" fill="#111" />)}
            </svg>
          </div>
          <Lens sign="-" /><Lens sign="+" /><Lens sign="A" />
        </div>
      </div>
    </>
  );
}

/* ---------- investor table ---------- */
type Row = { d: string; p: string; up: boolean; c: [string, string, string]; v: string[] };
const rows: Row[] = [
  { d: '2020/10/22', p: '15,450', up: false, c: ['1', '8,', '7'], v: ['6,899,734', '-196,569', '167,269', '-4,497,238', '-1,172,155', '-2,225,656', '-48,229', '337,823', '-1047414'] },
  { d: '2020/10/21', p: '16,800', up: false, c: ['6', '3,', '9'], v: ['6,915,885', '-220,034', '139,032', '-4,497,406', '-1,172,284', '-2,219,656', '-47,579', '337,823', '-1048103'] },
  { d: '2020/10/20', p: '17,400', up: true, c: ['2', '1', '3'], v: ['6,860,744', '-208,281', '163,546', '-4,459,162', '-1,172,307', '-2,214,461', '-47,037', '345,670', '-1018285'] },
  { d: '2020/10/19', p: '14,950', up: true, c: ['4', '2,', '4'], v: ['6,790,215', '-188,771', '166,757', '-4,407,385', '-1,172,378', '-2,217,513', '-58,899', '328,313', '-1018228'] },
  { d: '2020/10/16', p: '14,550', up: false, c: ['4', '2,', '1'], v: ['6,786,507', '-203,172', '153,036', '-4,386,013', '-1,172,150', '-2,220,360', '-58,697', '328,313', '-1018228'] },
];
const heads = ['일자', '주가', '등', '등', '거', '개인', '외국인', '프로그램', '기관', '금융투자', '기타법인', '연기금등', '투신', '사모펀드', '보'];
const widths = [68, 51, 16, 16, 6, 74, 89, 75, 83, 67, 69, 72, 80, 57, 5];
const rowBg = ['bg-[#c6dffd]', 'bg-[#e2e9f6]', 'bg-white', 'bg-[#e2e9f6]', 'bg-white'];
const tone = (v: string) => (v.startsWith('-') ? 'text-[#0a0a9c]' : 'text-[#c00014]');

function Radio({ name, label, checked, cls = '' }: { name: string; label: string; checked?: boolean; cls?: string }) {
  return (
    <label className={`flex items-center gap-[2px] whitespace-nowrap ${cls}`}>
      <input type="radio" name={name} defaultChecked={checked} className="size-3 appearance-none rounded-full border border-[#333] bg-white checked:bg-[#3c6c94] checked:shadow-[inset_0_0_0_2px_white]" />
      {label}
    </label>
  );
}

function InvestorTable() {
  return (
    <div className="min-w-0 flex-1 overflow-hidden bg-white pl-[2px]">
      <div className="flex h-[19px] items-start whitespace-nowrap text-[13px] leading-none text-[#111]">
        <DateField label="시작일" value="2019/10/21" h="h-4" size="pl-[5px]" cls="w-[98px]" />
        <span className="w-3 text-center leading-4">-</span>
        <DateField label="종료일" value="2020/10/22" h="h-4" size="pl-[5px]" cls="w-[99px]" />
        <Select label="조회 기간" options={['250일']} h="h-4" cls="ml-1 w-16" />
        <span className="ml-[6px] w-[84px] leading-4">전체 선택 시</span>
        <div className="flex h-4 w-[173px] shrink-0 items-center border border-[#93a1b1] pl-[6px]">
          <Radio name="mode" label="순매수" cls="w-[71px]" />
          <Radio name="mode" label="순매수누적" checked />
        </div>
        <div className="ml-[35px] flex h-4 w-[188px] shrink-0 items-center border border-[#93a1b1] pl-[6px]">
          <Radio name="unit" label="수량(주)" checked cls="w-[78px]" />
          <Radio name="unit" label="금액(백만원)" />
        </div>
        <label className="ml-1 flex h-4 items-center gap-1 text-xs">
          <span className="relative flex size-3">
            <input type="checkbox" defaultChecked className="size-3 appearance-none border border-[#2f4a70] bg-white" />
            <svg viewBox="0 0 12 12" className="pointer-events-none absolute inset-0 size-3"><path d="M3 6L5 9L9 3" fill="none" stroke="#2a6aa0" strokeWidth="2" /></svg>
          </span>
          수정주가
        </label>
      </div>
      <div className="flex">
        <table className="w-[828px] table-fixed border-collapse text-[11px] leading-none">
          <colgroup>{widths.map((w, i) => <col key={i} style={{ width: w }} />)}</colgroup>
          <thead>
            <tr className="h-4 bg-linear-to-b from-[#7288b4] to-[#5f77a6] text-xs leading-none text-white">
              {heads.map((h, i) => <th key={i} className="overflow-hidden whitespace-nowrap border-r border-[#4c628e] p-0 font-normal">{h}</th>)}
            </tr>
          </thead>
          <tbody>
            {rows.map((r, ri) => (
              <tr key={r.d} className={`h-[15px] ${rowBg[ri]}`}>
                <td className="border-r border-[#8a98ac] p-0 pr-1 text-right text-black">{r.d}</td>
                <td className={`border-r border-[#8a98ac] p-0 pr-1 text-right ${r.up ? 'text-[#c00014]' : 'text-[#0a0a9c]'}`}>{r.p}</td>
                <td className={`overflow-hidden border-r border-[#8a98ac] p-0 ${r.up ? 'text-[#d00010]' : 'text-[#0a0ac0]'}`}>
                  <span className="flex items-center gap-[2px] pl-[1px]"><Tri d={r.up ? 'M0 8H8L4 0Z' : 'M0 0H8L4 8Z'} s={10} />{r.c[0]}</span>
                </td>
                <td className={`overflow-hidden border-r border-[#8a98ac] p-0 text-center ${r.up ? 'text-[#c00014]' : 'text-[#0a0a9c]'}`}>{r.c[1]}</td>
                <td className="overflow-hidden border-r border-[#8a98ac] p-0 text-black">{r.c[2]}</td>
                {r.v.map((v, i) => (
                  <td key={i} className={`overflow-hidden whitespace-nowrap border-r border-[#8a98ac] p-0 pr-1 text-right ${i < 4 ? 'text-[13px] font-bold' : ''} ${tone(v)}`}>{v}</td>
                ))}
                <td className="overflow-hidden p-0 text-[#0a0a9c]">-</td>
              </tr>
            ))}
          </tbody>
        </table>
        <div className="ml-[2px] flex w-[15px] flex-col bg-[#eef0f5]">
          <button aria-label="위로 스크롤" className="flex h-4 items-center justify-center bg-[#e4e8f0] text-[#5a6c90]"><Tri d={UP} /></button>
          <div className="ml-px mt-[2px] h-[15px] w-[13px] bg-[#c4c9d6]" />
        </div>
      </div>
    </div>
  );
}

function InvestorChart() {
  const legend: [string, string][] = [['주가', '#107a18'], ['개인', '#0a0aa8'], ['기관', '#7c4410'], ['외국인', '#c01820']];
  return (
    <div className="h-full w-[598px] shrink-0 bg-white p-px">
      <div className="relative h-[105px] border border-[#8098b4] bg-[#f4f7fa]">
        <svg viewBox="862 814 594 103" className="block h-full w-full" aria-hidden="true">
          <rect x="909.5" y="817.5" width="489" height="78" fill="#fdffff" stroke="#8098b4" />
          <path d="M910 839.500H1398M910 858.500H1398M910 878.500H1398M1098.500 818V895M1226.500 818V895M1360.500 818V895" stroke="#c8d0d8" strokeDasharray="1 4" />
          <Line dash="4 3" c="#2a7a30" p="912,865 917,837 921,838 923,852 936,865 942,853 950,851 957,857 963,848 970,855 977,857 982,850 992,849 1007,867 1020,862 1033,869 1050,868 1060,864 1067,870 1073,885 1080,893 1087,887 1095,877 1120,873 1140,871 1152,861 1170,863 1178,868 1188,863 1197,852 1208,849 1225,860 1257,863 1263,857 1277,858 1283,854 1292,858 1300,864 1307,855 1315,847 1340,847 1346,843 1353,862 1360,857 1377,859 1381,849 1385,858" />
          <Line c="#1414a8" p="912,857 918,855 955,855 966,848 990,845 1005,843 1090,842 1105,841 1145,841 1190,840 1210,837 1380,837 1385,836" />
          <Line w={2} c="#cc1820" p="912,873 1385,873" />
          <Line c="#7c4410" p="912,881 920,882 950,883 970,888 985,890 1060,891 1090,892 1140,893 1300,893 1320,891 1345,891 1385,893" />
          {Array.from({ length: 12 }, (_, i) => <path key={i} d={`M906 ${827.5 + i * 6}H909M1399 ${827.5 + i * 6}H1401`} stroke="#8098b4" />)}
          {[912, 1097, 1225, 1359].map((x) => <path key={x} d={`M${x + 0.5} 897V902`} stroke="#8098b4" />)}
          <g fontSize="12" fill="#24344c">
            <text x="902" y="843" textAnchor="end">20,000</text>
            <text x="902" y="862" textAnchor="end">15,000</text>
            <text x="902" y="882" textAnchor="end">10,000</text>
            <text x="1455" y="849" textAnchor="end">50,000</text>
            <text x="1455" y="874" textAnchor="end">0</text>
            <text x="1455" y="891" textAnchor="end">×100</text>
            <text x="913" y="911">2019/11/22</text>
            <text x="1098" y="911">04</text>
            <text x="1226" y="911">07</text>
            <text x="1361" y="911">10</text>
          </g>
        </svg>
        <Legend items={legend} place="left-16 top-2" />
      </div>
    </div>
  );
}

export default function App() {
  return (
    <div className="flex min-h-screen w-full flex-col overflow-hidden bg-[#27364b] font-['Liberation_Sans','Noto_Sans_CJK_KR',sans-serif] text-[#16202e]">
      <header className="flex h-6 items-center border-t border-[#6f8fae] pl-[10px] text-white">
        <svg viewBox="0 0 10 8" className="mb-[3px] h-2 w-[10px]" fill="#fff" aria-hidden="true"><path d="M0 0h2v2H0zM3 0h2v2H3zM6 0h2v2H6zM3 3h2v2H3zM6 3h2v2H6zM6 6h2v2H6z" /></svg>
        <h1 className="ml-2 text-xs leading-none"><T s="1401 종합차트" /></h1>
        <div className="ml-auto flex h-full items-center text-[#dfe8f2]">
          <button aria-label="연결" className="mr-2"><Unplug size={13} fill="currentColor" strokeWidth={2.500} /></button>
          <button aria-label="도움말" className="mr-[7px] text-[14px] font-bold leading-none">?</button>
          <button aria-label="메뉴" className="mr-[13px]"><svg viewBox="0 0 12 12" className="size-3" fill="none" stroke="currentColor" strokeWidth="2"><path d="M1 2H11M1 6H8M1 10H6" /><path d="M7 8H12L9.500 11Z" fill="currentColor" stroke="none" /></svg></button>
          <button aria-label="최소화" className="mr-2 flex size-[10px] items-end"><i className="h-[2px] w-full bg-current" /></button>
          <button aria-label="최대화" className="mr-1 h-2 w-[9px] border border-t-2 border-current" />
          <button aria-label="닫기" className="flex h-[17px] w-[14px] items-center justify-center bg-[#5876a4]"><svg viewBox="0 0 8 8" className="size-2"><path d="M0 0l8 8M8 0l-8 8" stroke="#fff" strokeWidth="1.300" /></svg></button>
        </div>
      </header>
      <div className="flex border-l border-[#6a7c94] pl-[5px] pr-[2px]">
        <main className="flex min-w-0 flex-1 flex-col">
          <Toolbar />
          <InfoBar />
          <div className="overflow-hidden border-r-2 border-[#93a3cb] bg-[#fdffff]">
            <PricePanel />
            <Indicators />
            <TimeAxis />
          </div>
        </main>
        <ToolStrip />
      </div>
      <div className="mt-[3px] flex min-h-[109px] flex-1 border-l border-[#6a7c94] pl-[5px] pr-[2px]">
        <InvestorTable />
        <div className="w-[2px] shrink-0 bg-[#7c8fa8]" />
        <InvestorChart />
      </div>
    </div>
  );
}
